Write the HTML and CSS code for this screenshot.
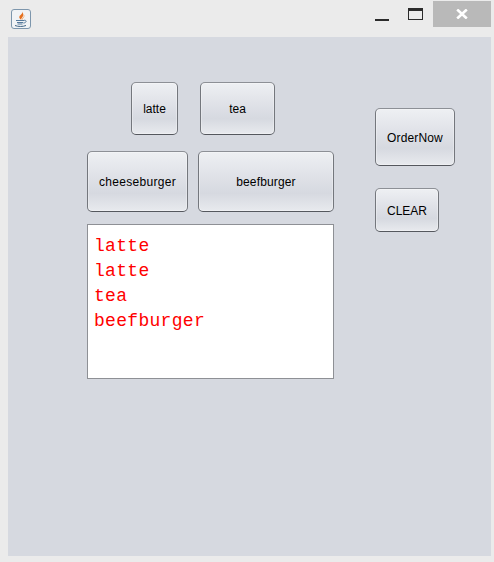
FILE: index.html
```html
<!DOCTYPE html>
<html lang="en">
<head>
    <meta charset="UTF-8">
    <meta name="viewport" content="width=device-width, initial-scale=1.0">
    <title>Order</title>
    <link rel="stylesheet" href="styles.css">
</head>
<body>
    <div class="titlebar">
        <div class="app-icon">
            <svg width="20" height="20" viewBox="0 0 20 20">
                <rect x="0.5" y="0.5" width="19" height="19" rx="2.5" fill="#f1f3f5" stroke="#7d96ac"/>
                <path d="M11 2.5 C12.5 5 8 6 8.3 8.5 C8.5 9.8 9.6 10.5 10.4 10.8 C9.6 9 13 7.8 12.3 5.3 C12.1 4.3 11.6 3.3 11 2.5 Z" fill="#e5701f"/>
                <path d="M13.3 6 C14.3 7.6 11.8 8.6 11.8 10.6 L10.9 10.6 C10.9 8.6 13.3 7.8 13.3 6 Z" fill="#f0a25f"/>
                <path d="M5 11.5 H13 M6 13.5 H12 M6.5 15 H11.5" stroke="#55799a" stroke-width="1" fill="none"/>
                <path d="M13 11.3 C16 10.8 15.8 14 12.3 14" stroke="#55799a" stroke-width="1" fill="none"/>
                <path d="M4 16.5 C7 17.8 12 17.8 15 16.5" stroke="#3f6484" stroke-width="1" fill="none"/>
            </svg>
        </div>
        <div class="win-controls">
            <div class="win-min"></div>
            <div class="win-max"></div>
            <div class="win-close">
                <svg width="12" height="10" viewBox="0 0 12 10">
                    <path d="M1.2 0.5 L10.8 9.5 M10.8 0.5 L1.2 9.5" stroke="#fff" stroke-width="2.6" fill="none"/>
                </svg>
            </div>
        </div>
    </div>

    <div class="panel">
        <div class="order-col">
            <div class="drinks">
                <button class="btn btn-latte">latte</button>
                <button class="btn btn-tea">tea</button>
            </div>
            <div class="burgers">
                <button class="btn btn-cheese">cheeseburger</button>
                <button class="btn btn-beef">beefburger</button>
            </div>
            <div class="order-list">
                <div>latte</div>
                <div>latte</div>
                <div>tea</div>
                <div>beefburger</div>
            </div>
        </div>
        <div class="action-col">
            <button class="btn btn-order">OrderNow</button>
            <button class="btn btn-clear">CLEAR</button>
        </div>
    </div>
</body>
</html>
```

FILE: styles.css
```css
* {
    margin: 0;
    padding: 0;
    box-sizing: border-box;
}

body {
    width: 494px;
    height: 562px;
    background: #ebebeb;
    font-family: "Liberation Sans", Arial, sans-serif;
    overflow: hidden;
}

.titlebar {
    height: 37px;
    display: flex;
    justify-content: space-between;
    padding: 1px 3px 0 11px;
}

.app-icon {
    height: 20px;
    margin-top: 8px;
}

.win-controls {
    display: flex;
    align-items: flex-start;
}

.win-min {
    width: 14px;
    height: 2px;
    background: #2b2b2b;
    margin-top: 18px;
}

.win-max {
    width: 15px;
    height: 12px;
    border: 1px solid #2b2b2b;
    border-top-width: 3px;
    margin: 7px 10px 0 19px;
}

.win-close {
    width: 58px;
    height: 26px;
    background: #b9b9b9;
    display: flex;
    align-items: center;
    justify-content: center;
}

.panel {
    width: 483px;
    height: 519px;
    margin-left: 8px;
    background: #d6d9e0;
    display: flex;
    padding: 45px 0 0 79px;
}

.order-col {
    width: 247px;
}

.drinks {
    display: flex;
    gap: 22px;
    margin: 0 0 16px 44px;
}

.burgers {
    display: flex;
    gap: 10px;
    margin-bottom: 12px;
}

.btn {
    display: block;
    font-family: "Liberation Sans", Arial, sans-serif;
    font-size: 12px;
    color: #000;
    border: 1px solid #74777d;
    border-top-color: #8d9096;
    border-bottom-color: #55585e;
    border-radius: 5px;
    background: linear-gradient(#eef0f3 0%, #e0e2e8 40%, #d6d9e0 70%, #e8eaee 100%);
    box-shadow: inset 0 0 0 1px rgba(255, 255, 255, 0.3);
}

.btn-latte { width: 47px; height: 53px; }
.btn-tea { width: 75px; height: 53px; }
.btn-cheese { width: 101px; height: 61px; letter-spacing: 0.3px; }
.btn-beef { width: 136px; height: 61px; letter-spacing: 0.15px; }
.btn-order { width: 80px; height: 58px; padding-top: 2px; letter-spacing: 0.15px; }
.btn-clear { width: 64px; height: 44px; padding-top: 2px; }

.order-list {
    height: 155px;
    background: #fff;
    border: 1px solid #8e9095;
    padding: 9px 6px;
    color: #ff0000;
    font-family: "Liberation Mono", "Courier New", monospace;
    font-size: 18px;
    letter-spacing: 0.3px;
    line-height: 25px;
}

.action-col {
    display: flex;
    flex-direction: column;
    gap: 22px;
    margin-left: 41px;
    padding-top: 26px;
}
```
